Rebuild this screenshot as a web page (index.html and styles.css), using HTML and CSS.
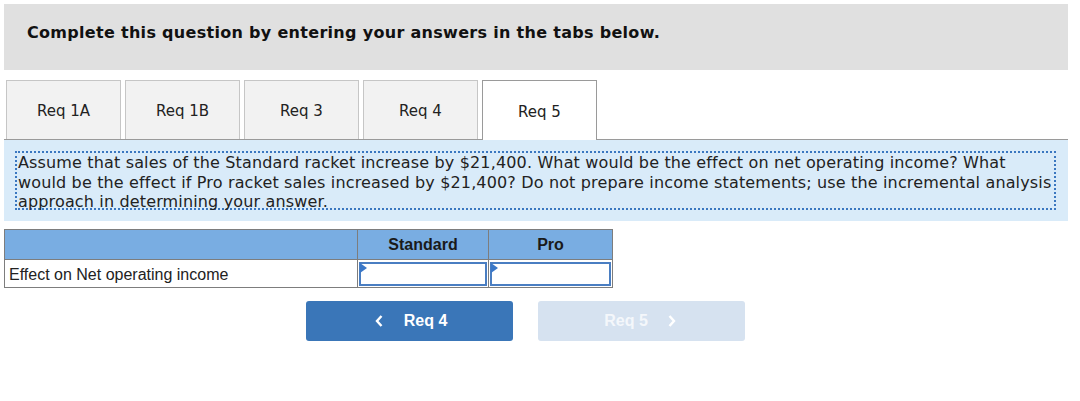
FILE: index.html
```html
<!DOCTYPE html>
<html>
<head>
<meta charset="utf-8">
<link rel="stylesheet" href="styles.css">
</head>
<body>
<div class="page">
  <div class="banner">Complete this question by entering your answers in the tabs below.</div>
  <div class="tabs">
    <div class="tab">Req 1A</div>
    <div class="tab">Req 1B</div>
    <div class="tab">Req 3</div>
    <div class="tab">Req 4</div>
    <div class="tab active">Req 5</div>
  </div>
  <div class="panel">
    <div class="prompt">Assume that sales of the Standard racket increase by $21,400. What would be the effect on net operating income? What<br>would be the effect if Pro racket sales increased by $21,400? Do not prepare income statements; use the incremental analysis<br>approach in determining your answer.</div>
  </div>
  <table class="grid">
    <tr class="head">
      <th class="label"></th>
      <th class="col">Standard</th>
      <th class="col2">Pro</th>
    </tr>
    <tr>
      <td class="label">Effect on Net operating income</td>
      <td class="cell"><div class="input"><span class="flag"></span></div></td>
      <td class="cell"><div class="input"><span class="flag"></span></div></td>
    </tr>
  </table>
  <div class="nav">
    <button class="btn prev"><svg width="10" height="14" viewBox="0 0 10 14"><path d="M7.5 2 L3 7 L7.5 12" fill="none" stroke="#fff" stroke-width="2.4"/></svg><span>Req 4</span></button>
    <button class="btn next"><span>Req 5</span><svg width="10" height="14" viewBox="0 0 10 14"><path d="M2.5 2 L7 7 L2.5 12" fill="none" stroke="#fff" stroke-width="2.4"/></svg></button>
  </div>
</div>
</body>
</html>
```
FILE: styles.css
```css
html, body { margin: 0; padding: 0; background: #fff; }
.page { padding: 4px 12px 0 4px; width: 1064px; }
.banner {
  background: #e0e0e0;
  height: 66px;
  box-sizing: border-box;
  padding: 19px 0 0 23px;
  font-family: "DejaVu Sans", Verdana, sans-serif;
  font-weight: bold;
  font-size: 16px;
  letter-spacing: 0.3px;
  color: #111;
}
.tabs {
  display: flex;
  gap: 4px;
  margin-top: 10px;
  padding-left: 2px;
  border-bottom: 1px solid #9a9a9a;
  height: 59px;
}
.tab {
  width: 115px;
  height: 59px;
  box-sizing: border-box;
  background: #f2f2f2;
  border: 1px solid #c6c6c6;
  border-bottom: none;
  display: flex;
  align-items: center;
  justify-content: center;
  font-family: "DejaVu Sans", Verdana, sans-serif;
  font-size: 15px;
  color: #222;
  padding-top: 2px;
}
.tab.active {
  background: #fff;
  border: 1px solid #9a9a9a;
  border-bottom: none;
  height: 60px;
  margin-bottom: -1px;
}
.panel {
  background: #d9ebf9;
  height: 81px;
  box-sizing: border-box;
  padding: 11px 12px 0 11px;
}
.prompt {
  border: 2px dotted #3a77c0;
  height: 59px;
  box-sizing: border-box;
  font-family: "DejaVu Sans", Verdana, sans-serif;
  font-size: 16px;
  letter-spacing: 0.15px;
  line-height: 19.5px;
  color: #222;
  padding: 0 0 0 1px;
  white-space: nowrap;
}
.grid {
  margin-top: 8px;
  border-collapse: collapse;
  font-family: "Liberation Sans", Arial, sans-serif;
  width: 609px;
}
.grid th, .grid td { border: 1px solid #7d7d7d; padding: 0; }
.grid .head { background: #79ade2; height: 30px; }
.grid th { font-size: 16px; font-weight: bold; color: #1a1a1a; }
.grid th.label { width: 352px; }
.grid th.col { width: 130px; }
.grid td.label { font-size: 16px; color: #222; padding: 2px 3px 0 4px; height: 25px; }
.grid td.cell { padding: 1px; }
.input {
  position: relative;
  height: 24px;
  border: 2px solid #4a7ec2;
  box-sizing: border-box;
  background: #fff;
}
.flag {
  position: absolute;
  left: -1px; top: -1px;
  width: 0; height: 0;
  border-top: 5px solid transparent;
  border-bottom: 5px solid transparent;
  border-left: 7px solid #3b78c8;
}
.nav {
  display: flex;
  gap: 25px;
  margin-top: 13px;
  padding-left: 302px;
}
.btn {
  width: 207px;
  height: 40px;
  border: none;
  border-radius: 3px;
  font-family: "Liberation Sans", Arial, sans-serif;
  font-weight: bold;
  font-size: 16px;
  color: #fff;
  display: flex;
  align-items: center;
  justify-content: center;
  gap: 20px;
  padding: 0;
}
.btn.prev { background: #3a76b8; padding-left: 2px; }
.btn.next { background: #d6e2f0; color: #f4f7fb; padding-right: 2px; gap: 19px; }
```
